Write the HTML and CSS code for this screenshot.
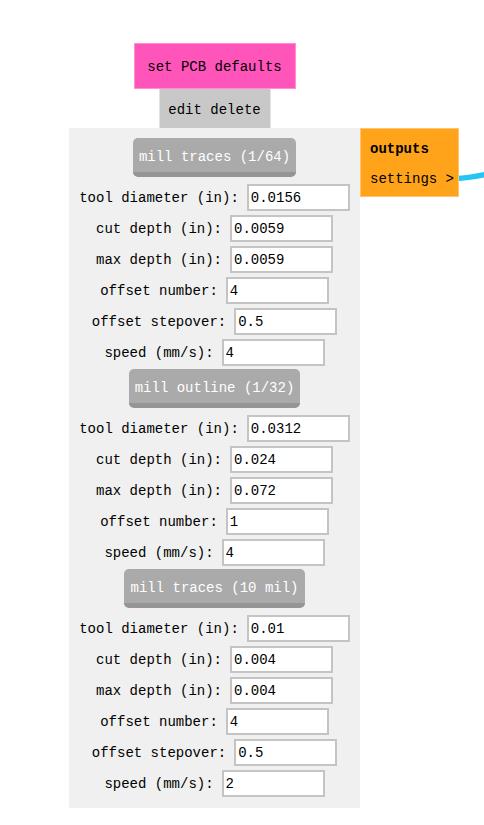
FILE: index.html
```html
<!DOCTYPE html>
<html>
<head>
<meta charset="utf-8">
<link rel="stylesheet" href="styles.css">
</head>
<body>
<div class="canvas">
  <svg class="wire" width="484" height="825" viewBox="0 0 484 825">
    <path d="M 456 178.5 C 468 178, 476 176.5, 490 173.5" stroke="#22c5f6" stroke-width="5.5" fill="none"/>
  </svg>

  <div class="node mill">
    <div class="title">set PCB defaults</div>
    <div class="edit">edit delete</div>
    <div class="panel">
      <div class="btn">mill traces (1/64)</div>
      <div class="row"><span>tool diameter (in):</span><input class="field" value="0.0156"></div>
      <div class="row"><span>cut depth (in):</span><input class="field" value="0.0059"></div>
      <div class="row"><span>max depth (in):</span><input class="field" value="0.0059"></div>
      <div class="row"><span>offset number:</span><input class="field" value="4"></div>
      <div class="row"><span>offset stepover:</span><input class="field" value="0.5"></div>
      <div class="row"><span>speed (mm/s):</span><input class="field" value="4"></div>

      <div class="btn">mill outline (1/32)</div>
      <div class="row"><span>tool diameter (in):</span><input class="field" value="0.0312"></div>
      <div class="row"><span>cut depth (in):</span><input class="field" value="0.024"></div>
      <div class="row"><span>max depth (in):</span><input class="field" value="0.072"></div>
      <div class="row"><span>offset number:</span><input class="field" value="1"></div>
      <div class="row"><span>speed (mm/s):</span><input class="field" value="4"></div>

      <div class="btn">mill traces (10 mil)</div>
      <div class="row"><span>tool diameter (in):</span><input class="field" value="0.01"></div>
      <div class="row"><span>cut depth (in):</span><input class="field" value="0.004"></div>
      <div class="row"><span>max depth (in):</span><input class="field" value="0.004"></div>
      <div class="row"><span>offset number:</span><input class="field" value="4"></div>
      <div class="row"><span>offset stepover:</span><input class="field" value="0.5"></div>
      <div class="row"><span>speed (mm/s):</span><input class="field" value="2"></div>
    </div>
  </div>

  <div class="node outputs">
    <div class="out-title">outputs</div>
    <div class="out-link">settings &gt;</div>
  </div>
</div>
</body>
</html>
```
FILE: styles.css
```css
html, body {
  margin: 0;
  padding: 0;
  background: #ffffff;
}
body {
  font-family: "Liberation Mono", "DejaVu Sans Mono", monospace;
  font-size: 14px;
  color: #000;
}
.canvas {
  position: relative;
  width: 484px;
  height: 825px;
  overflow: hidden;
}
.wire {
  position: absolute;
  left: 0;
  top: 0;
}
.node {
  position: absolute;
}
.mill {
  left: 69px;
  top: 43px;
  width: 291px;
  display: flex;
  flex-direction: column;
  align-items: center;
}
.title {
  box-sizing: border-box;
  width: 162px;
  height: 46px;
  padding-top: 2px;
  background: #ff55bb;
  border: 1px solid #ff90d0;
  display: flex;
  align-items: center;
  justify-content: center;
}
.edit {
  box-sizing: border-box;
  width: 112px;
  height: 39px;
  padding-top: 3px;
  background: #c8c8c8;
  border-left: 1px solid #e2e2e2;
  border-right: 1px solid #e2e2e2;
  display: flex;
  align-items: center;
  justify-content: center;
}
.panel {
  box-sizing: border-box;
  width: 291px;
  background: #f0f0f0;
  padding: 9px 0 9px;
  display: flex;
  flex-direction: column;
  align-items: center;
}
.btn {
  box-sizing: border-box;
  height: 39px;
  margin: 1px 0 5px;
  padding: 3px 6px 0;
  background: #aaaaaa;
  border-bottom: 5px solid #959595;
  border-radius: 5px;
  color: #ffffff;
  display: flex;
  align-items: center;
  justify-content: center;
}
.row {
  height: 31px;
  display: flex;
  align-items: center;
  justify-content: center;
  gap: 8px;
  white-space: pre;
}
.field {
  box-sizing: border-box;
  width: 103px;
  height: 27px;
  margin: 0;
  padding: 0 2px;
  border: 2px solid #c4c4c4;
  background: #ffffff;
  font-family: "Liberation Mono", "DejaVu Sans Mono", monospace;
  font-size: 14px;
  color: #000;
  outline: none;
}
.outputs {
  left: 360px;
  top: 128px;
  box-sizing: border-box;
  width: 99px;
  height: 69px;
  background: #ffa31a;
  border: 1px solid #ffc46e;
  padding: 9px 0 0 9px;
}
.out-title {
  font-weight: bold;
  height: 30px;
  line-height: 22px;
}
.out-link {
  line-height: 22px;
}
```
